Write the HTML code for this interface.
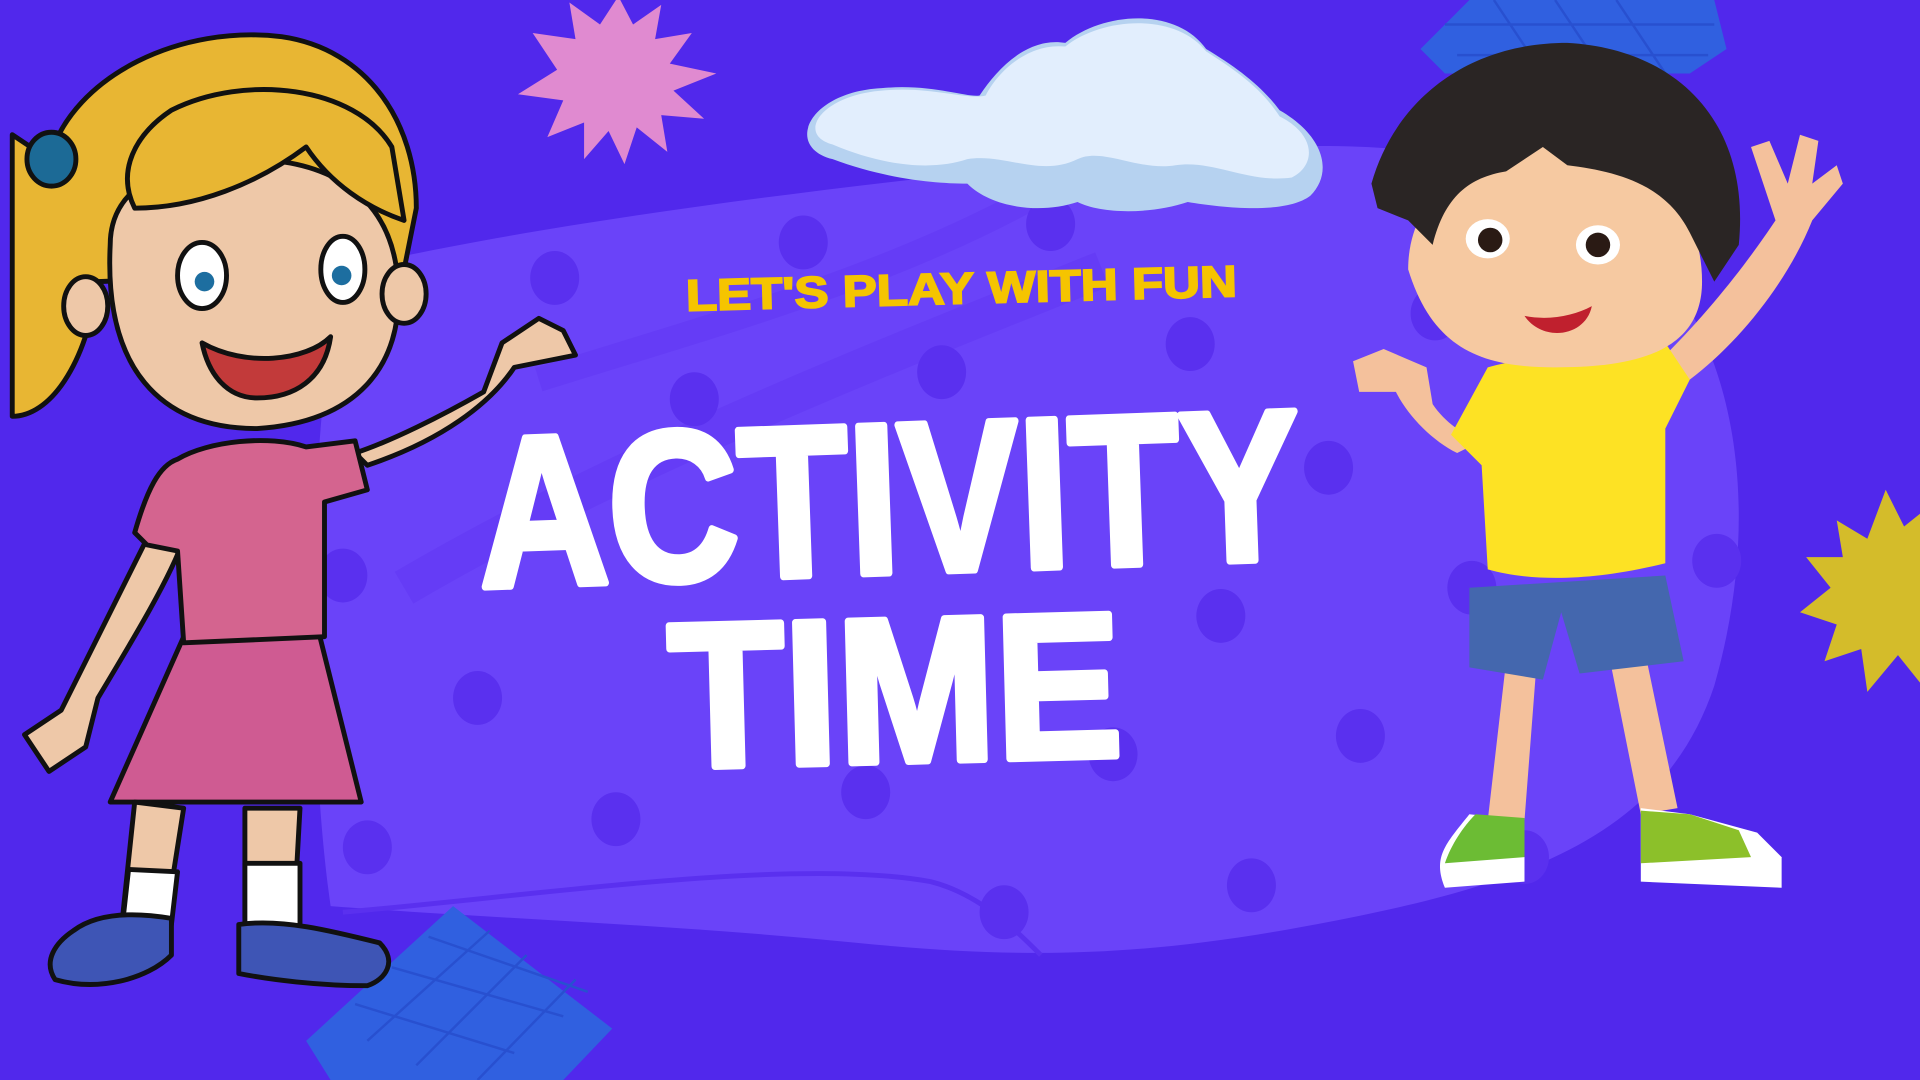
<!DOCTYPE html>
<html><head><meta charset="utf-8"><style>
html,body{margin:0;padding:0;width:1920px;height:1080px;overflow:hidden;background:#5128ec}
svg{display:block}
</style></head><body>
<svg width="1920" height="1080" viewBox="0 0 1568 882" xmlns="http://www.w3.org/2000/svg">
<rect width="1568" height="882" fill="#5128ec"/>
<path d="M280 220 C450 180 700 150 900 130 C1100 110 1250 110 1340 200 C1420 280 1440 420 1400 560 C1360 680 1250 720 1100 750 C950 780 850 785 700 770 C550 755 400 750 270 740 C250 600 250 350 280 220Z" fill="#6a43f9"/>
<path d="M330 480 C500 380 700 300 900 220" stroke="#6239f4" stroke-width="30" fill="none" opacity=".6"/>
<path d="M440 310 C600 260 750 220 880 140" stroke="#6239f4" stroke-width="20" fill="none" opacity=".6"/>
<path d="M280 745 C450 730 650 700 760 720 C800 730 830 760 850 780" stroke="#5a30ef" stroke-width="4" fill="none"/>
<g fill="#5a30ef">
<ellipse cx="453" cy="227" rx="20" ry="22"/><ellipse cx="656" cy="198" rx="20" ry="22"/>
<ellipse cx="567" cy="326" rx="20" ry="22"/><ellipse cx="769" cy="304" rx="20" ry="22"/>
<ellipse cx="972" cy="281" rx="20" ry="22"/><ellipse cx="1085" cy="382" rx="20" ry="22"/>
<ellipse cx="909" cy="616" rx="20" ry="22"/><ellipse cx="707" cy="647" rx="20" ry="22"/>
<ellipse cx="503" cy="669" rx="20" ry="22"/><ellipse cx="390" cy="570" rx="20" ry="22"/>
<ellipse cx="300" cy="692" rx="20" ry="22"/><ellipse cx="997" cy="503" rx="20" ry="22"/>
<ellipse cx="1111" cy="601" rx="20" ry="22"/><ellipse cx="1022" cy="723" rx="20" ry="22"/>
<ellipse cx="820" cy="745" rx="20" ry="22"/><ellipse cx="858" cy="183" rx="20" ry="22"/>
<ellipse cx="1202" cy="480" rx="20" ry="22"/><ellipse cx="1402" cy="458" rx="20" ry="22"/>
<ellipse cx="1172" cy="256" rx="20" ry="22"/><ellipse cx="280" cy="470" rx="20" ry="22"/>
<ellipse cx="1245" cy="700" rx="20" ry="22"/><ellipse cx="1350" cy="320" rx="20" ry="22"/>
</g>
<g>
<path d="M250 850 L370 740 L500 840 L460 882 L270 882Z" fill="#3060e0"/>
<path d="M1160 40 L1200 0 L1400 0 L1410 40 L1380 60 L1180 60Z" fill="#3060e0"/>
<g stroke="#2850d0" stroke-width="2">
<path d="M290 820 L420 860 M320 790 L460 830 M350 765 L480 810 M300 850 L400 760 M340 870 L430 780 M390 882 L470 800"/>
<path d="M1180 20 L1400 20 M1190 45 L1395 45 M1220 0 L1260 60 M1270 0 L1310 60 M1320 0 L1360 60"/>
</g></g>
<g transform="translate(505,62)"><polygon fill="#e08ad0" points="0,-65 12,-42 35,-58 30,-30 60,-35 42,-10 80,-2 45,12 70,35 35,32 40,62 15,42 5,72 -8,45 -28,68 -28,38 -58,50 -45,20 -82,15 -50,-5 -70,-35 -35,-30 -40,-60 -15,-42"/></g>
<g transform="translate(1540,480)"><polygon fill="#d4bc2a" points="0,-80 15,-50 40,-70 40,-35 70,-40 55,-10 80,5 55,20 70,50 35,45 30,80 10,55 -15,85 -20,50 -50,60 -40,30 -70,20 -45,0 -65,-25 -35,-25 -40,-55 -15,-40"/></g>
<g>
<path d="M680 130 C640 120 660 75 720 72 C760 68 790 80 800 78 C815 55 840 30 870 35 C900 10 960 5 985 40 C1010 55 1030 70 1045 90 C1080 110 1090 140 1070 160 C1050 175 1000 170 970 165 C940 175 900 175 880 165 C850 175 810 170 790 150 C760 150 720 145 680 130Z" fill="#b6d2f0"/>
<path d="M680 118 C650 110 670 78 720 74 C760 70 790 82 805 78 C815 58 840 35 870 38 C900 14 960 10 985 42 C1010 58 1030 72 1045 95 C1075 110 1075 135 1055 145 C1020 150 990 130 960 135 C930 140 900 120 880 130 C850 145 820 125 790 130 C760 140 720 135 680 118Z" fill="#e2eefd"/>
</g>
<g transform="rotate(-1.5 780 230)"><text x="560" y="248" font-family="Liberation Sans, sans-serif" font-weight="bold" font-size="36" fill="#f5c400" stroke="#f5c400" stroke-width="1.5" textLength="450" lengthAdjust="spacingAndGlyphs">LET'S PLAY WITH FUN</text></g>
<g transform="rotate(-2 720 410)"><text x="390" y="468" font-family="Liberation Sans, sans-serif" font-weight="bold" font-size="175" fill="#fff" stroke="#fff" stroke-width="6" stroke-linejoin="round" textLength="672" lengthAdjust="spacingAndGlyphs">ACTIVITY</text></g>
<g transform="rotate(-1.5 730 560)"><text x="546" y="622" font-family="Liberation Sans, sans-serif" font-weight="bold" font-size="168" fill="#fff" stroke="#fff" stroke-width="6" stroke-linejoin="round" textLength="370" lengthAdjust="spacingAndGlyphs">TIME</text></g>
<g stroke="#111" stroke-width="4" stroke-linejoin="round">
<path d="M300 380 C360 360 400 330 420 300 L470 290 L460 270 L440 260 L410 280 L395 320 C360 340 320 360 290 370Z" fill="#eec8a8"/>
<path d="M130 420 C100 480 70 540 50 580 L20 600 L40 630 L70 610 L80 570 C110 520 140 470 150 440Z" fill="#eec8a8"/>
<path d="M150 520 L260 515 L295 655 L90 655Z" fill="#cf5b92"/>
<path d="M145 375 C170 360 220 355 250 365 L290 360 L300 400 L265 410 L265 520 L150 525 L145 450 L120 445 L110 435 C120 400 130 380 145 375Z" fill="#d4648f"/>
<path d="M110 655 L100 750 L135 755 L150 660Z M200 660 L200 750 L240 750 L245 660Z" fill="#eec8a8"/>
<path d="M105 710 L100 755 L140 755 L145 712Z M200 705 L200 760 L245 760 L245 705Z" fill="#fff"/>
<path d="M60 760 C80 745 110 745 140 750 L140 780 C120 800 80 810 45 800 C35 785 45 770 60 760Z M195 755 C230 750 270 760 310 770 C325 785 315 800 300 805 C260 805 220 800 195 795Z" fill="#3e55b5"/>
<path d="M40 130 C60 60 150 20 230 30 C300 40 340 100 340 170 L330 220 L80 230 C70 300 40 340 10 340 L10 110Z" fill="#e8b633"/>
<ellipse cx="42" cy="130" rx="20" ry="22" fill="#1c6a96"/>
<path d="M90 200 C90 150 140 130 200 130 C270 130 320 160 325 230 C330 300 290 345 210 350 C130 350 85 300 90 200Z" fill="#eec8a8"/>
<ellipse cx="70" cy="250" rx="18" ry="24" fill="#eec8a8"/>
<ellipse cx="330" cy="240" rx="18" ry="24" fill="#eec8a8"/>
<path d="M110 170 C160 170 210 150 250 120 C270 150 300 170 330 180 L320 120 C290 70 200 60 140 90 C110 110 95 140 110 170Z" fill="#e8b633"/>
<ellipse cx="165" cy="225" rx="20" ry="27" fill="#fff"/>
<ellipse cx="280" cy="220" rx="18" ry="27" fill="#fff"/>
<path d="M165 280 C200 300 250 295 270 275 C265 310 240 325 210 325 C185 325 170 305 165 280Z" fill="#c23a3a"/>
</g>
<circle cx="167" cy="230" r="8" fill="#1d6ea0"/><circle cx="279" cy="225" r="8" fill="#1d6ea0"/>
<g>
<path d="M1360 290 C1400 250 1430 210 1450 180 L1430 120 L1445 115 L1460 150 L1470 110 L1485 115 L1480 150 L1500 135 L1505 150 L1480 180 C1460 230 1420 280 1380 310Z" fill="#f4c19c"/>
<path d="M1190 370 C1170 360 1150 340 1140 320 L1110 320 L1105 295 L1130 285 L1165 300 L1170 330 C1180 345 1195 355 1210 360Z" fill="#f4c19c"/>
<path d="M1230 540 L1215 670 L1245 670 L1255 540Z M1315 540 L1340 665 L1370 660 L1345 540Z" fill="#f4c19c"/>
<path d="M1200 480 L1360 470 L1375 540 L1290 550 L1275 500 L1260 555 L1200 545Z" fill="#4467ae"/>
<path d="M1215 300 C1250 290 1310 285 1360 280 L1380 310 L1360 350 L1360 460 C1300 475 1250 475 1215 465 L1210 380 L1185 355Z" fill="#fde224"/>
<path d="M1200 665 L1245 670 L1245 720 L1180 725 C1170 700 1180 690 1200 665Z" fill="#fff"/>
<path d="M1205 665 L1245 668 L1245 700 L1180 705 C1185 690 1195 675 1205 665Z" fill="#6cbc34"/>
<path d="M1340 660 L1380 665 L1435 680 L1455 700 L1455 725 L1340 720Z" fill="#fff"/>
<path d="M1340 662 L1380 665 L1420 678 L1430 700 L1340 705Z" fill="#8cc02a"/>
<path d="M1150 220 C1150 160 1200 120 1270 118 C1350 118 1390 170 1390 230 C1390 290 1330 300 1270 300 C1210 300 1170 285 1150 220Z" fill="#f6c9a1"/>
<path d="M1120 150 C1140 80 1200 35 1280 35 C1370 40 1430 100 1420 200 L1400 230 L1380 190 C1360 150 1320 140 1280 135 L1260 120 L1230 140 C1200 145 1180 160 1170 200 L1150 180 L1125 170Z" fill="#2a2524"/>
<ellipse cx="1215" cy="195" rx="18" ry="16" fill="#fff"/><ellipse cx="1305" cy="200" rx="18" ry="16" fill="#fff"/>
<circle cx="1217" cy="196" r="10" fill="#2a1a14"/><circle cx="1305" cy="200" r="10" fill="#2a1a14"/>
<path d="M1245 258 C1265 262 1285 258 1300 250 C1295 275 1260 280 1245 258Z" fill="#c0202e"/>
</g>
</svg>
</body></html>
